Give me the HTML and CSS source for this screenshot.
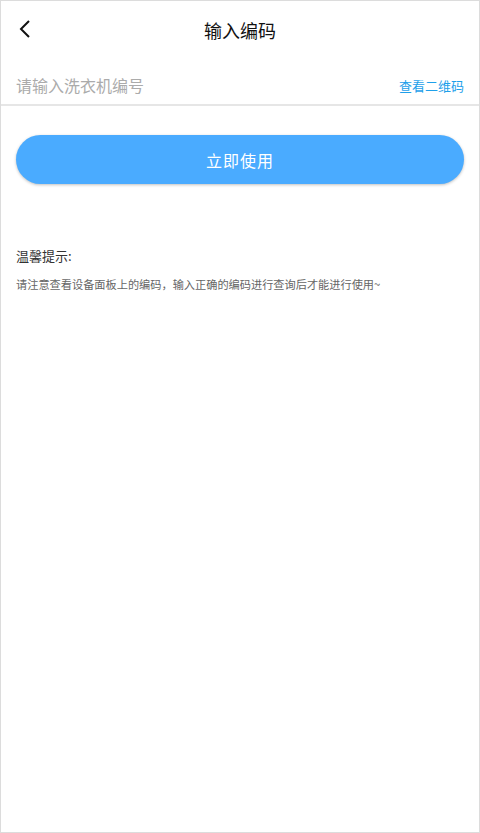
FILE: index.html
```html
<!DOCTYPE html>
<html lang="zh-CN">
<head>
    <meta charset="UTF-8">
    <meta name="viewport" content="width=device-width, initial-scale=1.0">
    <title>输入编码</title>
    <link rel="stylesheet" href="styles.css">
</head>
<body>
    <div class="page">
        <header class="nav-bar">
            <a class="nav-back" href="#">
                <svg width="12" height="20" viewBox="0 0 12 20">
                    <path d="M10 2 L2 10 L10 18" fill="none" stroke="#111" stroke-width="2"/>
                </svg>
            </a>
            <h1 class="nav-title">输入编码</h1>
        </header>

        <div class="code-input">
            <input type="text" placeholder="请输入洗衣机编号">
            <a class="qr-link" href="#">查看二维码</a>
        </div>

        <div class="actions">
            <button class="btn-primary">立即使用</button>
        </div>

        <div class="tips">
            <div class="tips-title">温馨提示:</div>
            <p class="tips-text">请注意查看设备面板上的编码，输入正确的编码进行查询后才能进行使用~</p>
        </div>
    </div>
</body>
</html>
```

FILE: styles.css
```css
html, body {
    margin: 0;
    padding: 0;
    height: 100%;
}

body {
    font-family: "Noto Sans CJK SC", "Noto Sans", sans-serif;
    background: #fff;
}

.page {
    box-sizing: border-box;
    height: 833px;
    border: 1px solid #dcdcdc;
    background: #fff;
}

.nav-bar {
    position: relative;
    height: 58px;
    display: flex;
    align-items: center;
    justify-content: center;
}

.nav-back {
    position: absolute;
    left: 18px;
    top: 18px;
    display: flex;
}

.nav-title {
    margin: 0;
    font-size: 18px;
    font-weight: 400;
    color: #111;
}

.code-input {
    box-sizing: border-box;
    display: flex;
    align-items: center;
    height: 47px;
    padding: 6px 15px 0;
    border-bottom: 2px solid #e6e6e6;
}

.code-input input {
    flex: 1;
    border: none;
    outline: none;
    padding: 0;
    font-family: inherit;
    font-size: 16px;
    color: #333;
    background: transparent;
}

.code-input input::placeholder {
    color: #ababab;
}

.qr-link {
    font-size: 13px;
    color: #1ea0ea;
    text-decoration: none;
    margin-top: 1px;
}

.actions {
    padding: 29px 15px 0;
}

.btn-primary {
    display: block;
    width: 100%;
    height: 49px;
    border: none;
    border-radius: 25px;
    background: #4aabff;
    color: #fff;
    font-family: inherit;
    font-size: 16px;
    letter-spacing: 1px;
    box-shadow: 0 1px 3px rgba(0,0,0,0.25);
}

.tips {
    padding: 63px 15px 0;
}

.tips-title {
    font-size: 13px;
    color: #333;
    line-height: 18px;
}

.tips-text {
    margin: 10px 0 0;
    font-size: 11.2px;
    color: #666;
    line-height: 18px;
}
```
